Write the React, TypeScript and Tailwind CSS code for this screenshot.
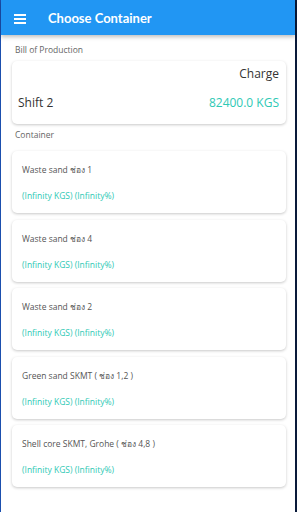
import React from "react";

const containers = [
  "Waste sand ช่อง 1",
  "Waste sand ช่อง 4",
  "Waste sand ช่อง 2",
  "Green sand SKMT ( ช่อง 1,2 )",
  "Shell core SKMT, Grohe ( ช่อง 4,8  )",
];

export default function App() {
  return (
    <div
      className="w-[297px] h-[512px] overflow-hidden bg-[#1b4fae] flex"
      style={{ fontFamily: '"Open Sans", "Noto Sans", "DejaVu Sans", sans-serif' }}
    >
      <div className="ml-[1px] w-[294px] h-full bg-white flex flex-col">
        {/* App bar */}
        <div className="h-[35px] shrink-0 bg-[#2196f3] flex items-center pt-[3px] shadow-[0_2px_4px_rgba(0,0,0,0.25)] relative z-10">
          <div className="ml-[13px] w-[12px] flex flex-col gap-[2px]">
            <div className="h-[2px] bg-white" />
            <div className="h-[2px] bg-white" />
            <div className="h-[2px] bg-white" />
          </div>
          <h1
            className="ml-[22px] text-[13px] font-bold text-white"
            style={{ fontFamily: 'Lato, "Open Sans", sans-serif' }}
          >
            Choose Container
          </h1>
        </div>

        <div className="pl-[11px] pr-[9px] pt-[9px]">
          <p className="ml-[3px] text-[8.5px] text-[#666] leading-[12px]">Bill of Production</p>

          <div className="mt-[5px] h-[63px] rounded-[5px] bg-white shadow-[0_1px_3px_rgba(0,0,0,0.22)] px-[7px] pt-[4px] flex flex-col">
            <div className="text-right text-[12px] text-[#333] leading-[17px]">Charge</div>
            <div className="mt-[12px] flex justify-between text-[12px] leading-[17px]">
              <span className="ml-[-1px] text-[#333]">Shift 2</span>
              <span className="text-[#2ec9b5]">82400.0 KGS</span>
            </div>
          </div>

          <p className="ml-[3px] mt-[5px] text-[8.5px] text-[#666] leading-[12px]">Container</p>

          <div className="mt-[10px] flex flex-col gap-[6.5px]">
            {containers.map((c) => (
              <div
                key={c}
                className="h-[62px] rounded-[5px] bg-white shadow-[0_1px_3px_rgba(0,0,0,0.22)] px-[10px] pt-[12px]"
              >
                <div className="text-[8.5px] text-[#555] leading-[14px]">{c}</div>
                <div className="mt-[12px] text-[8.5px] text-[#2ec9b5] leading-[14px]">
                  (Infinity KGS) (Infinity%)
                </div>
              </div>
            ))}
          </div>
        </div>
      </div>
      <div className="w-[2px] h-full bg-[#0a1a3a]" />
    </div>
  );
}
